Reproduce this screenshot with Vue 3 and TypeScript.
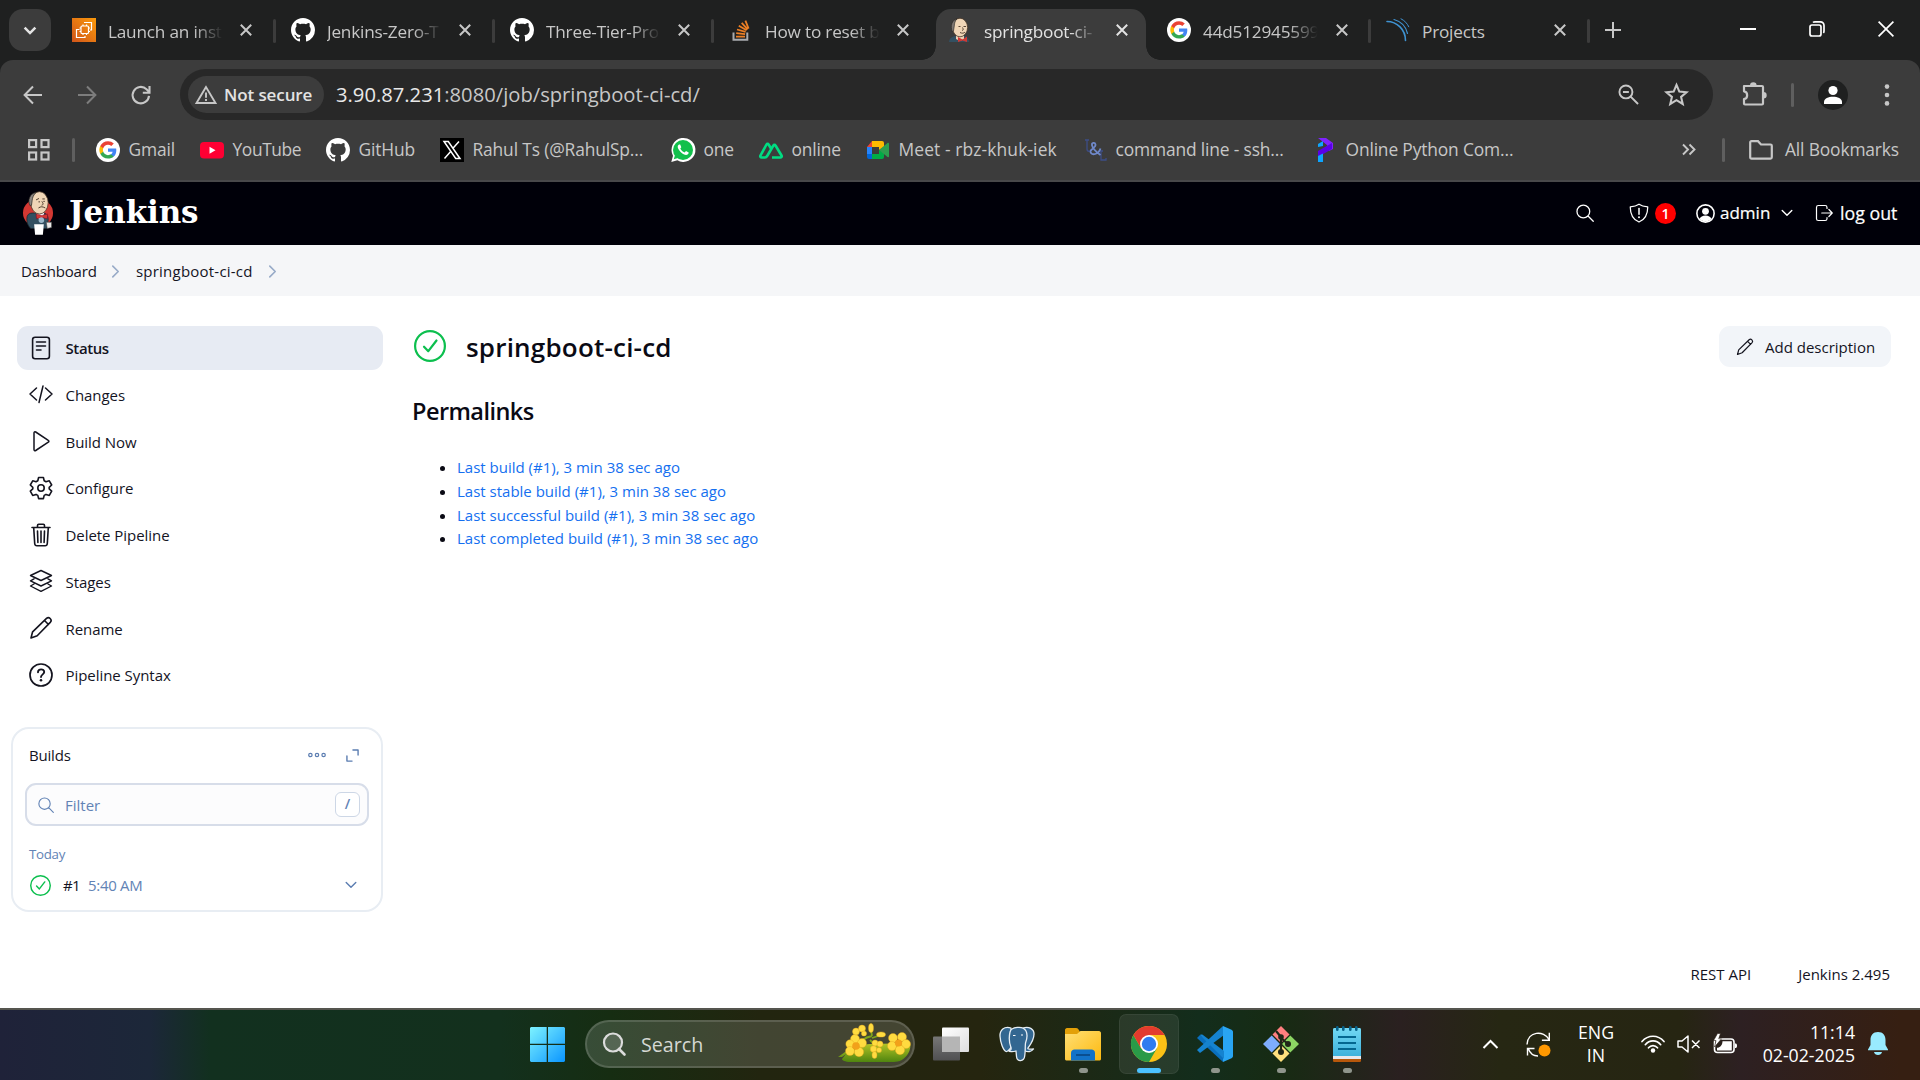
<script setup lang="ts">
interface Tab {
  icon: string
  title: string
  active?: boolean
  sep?: boolean
}

interface Bookmark {
  icon: string
  label: string
  width: number
}

const tabs: Tab[] = [
  { icon: 'aws', title: 'Launch an inst', sep: true },
  { icon: 'githubLight', title: 'Jenkins-Zero-T', sep: true },
  { icon: 'githubLight', title: 'Three-Tier-Pro', sep: true },
  { icon: 'stack', title: 'How to reset b' },
  { icon: 'butler', title: 'springboot-ci-', active: true },
  { icon: 'google', title: '44d512945599', sep: true },
  { icon: 'sonar', title: 'Projects', sep: true },
]

const bookmarks: Bookmark[] = [
  { icon: 'google', label: 'Gmail', width: 104 },
  { icon: 'youtube', label: 'YouTube', width: 126 },
  { icon: 'githubLight', label: 'GitHub', width: 114 },
  { icon: 'x', label: 'Rahul Ts (@RahulSp...', width: 231 },
  { icon: 'whatsapp', label: 'one', width: 88 },
  { icon: 'nuxt', label: 'online', width: 107 },
  { icon: 'meet', label: 'Meet - rbz-khuk-iek', width: 217 },
  { icon: 'ul', label: 'command line - ssh...', width: 230 },
  { icon: 'python', label: 'Online Python Com...', width: 204 },
]

const tasks = [
  { icon: 'doc', label: 'Status', active: true },
  { icon: 'code', label: 'Changes' },
  { icon: 'play', label: 'Build Now' },
  { icon: 'gear', label: 'Configure' },
  { icon: 'trash', label: 'Delete Pipeline' },
  { icon: 'layers', label: 'Stages' },
  { icon: 'pencil', label: 'Rename' },
  { icon: 'help', label: 'Pipeline Syntax' },
]

const permalinks = [
  'Last build (#1), 3 min 38 sec ago',
  'Last stable build (#1), 3 min 38 sec ago',
  'Last successful build (#1), 3 min 38 sec ago',
  'Last completed build (#1), 3 min 38 sec ago',
]

const apps = [
  { icon: 'taskview', state: '' },
  { icon: 'postgres', state: '' },
  { icon: 'folder', state: 'open' },
  { icon: 'chrome', state: 'current' },
  { icon: 'vscode', state: 'open' },
  { icon: 'git', state: 'open' },
  { icon: 'notepad', state: 'open' },
]

const line = 'fill="none" stroke="currentColor" stroke-linecap="round" stroke-linejoin="round"'

const icons: Record<string, { box: string; body: string }> = {
  aws: {
    box: '0 0 24 24',
    body: '<defs><linearGradient id="awsg" x1="0" y1="1" x2="1" y2="0"><stop offset="0" stop-color="#d0551a"/><stop offset="1" stop-color="#fb9a0b"/></linearGradient></defs><rect width="24" height="24" fill="url(#awsg)"/><g fill="none" stroke="#fff" stroke-width="1.2"><rect x="9" y="8" width="7.5" height="7.5" rx="1"/><path d="M11 8V6.5M14.5 8V6.5M11 17v-1.500M14.500 17v-1.500M9 10H7.500M9 13.500H7.500M18 10h-1.500M18 13.500h-1.500M12 4.500h7.500V12H18M7.500 11.500H4.500v8H13V18"/></g>',
  },
  githubLight: {
    box: '0 0 16 16',
    body: '<path fill="#fff" fill-rule="evenodd" d="M8 0C3.58 0 0 3.58 0 8c0 3.540 2.290 6.530 5.470 7.590.4.070.550-.170.550-.380 0-.190-.010-.820-.010-1.490-2.010.370-2.530-.490-2.690-.940-.090-.230-.480-.940-.820-1.130-.280-.150-.680-.520-.010-.530.630-.010 1.080.580 1.230.820.720 1.210 1.870.870 2.330.660.070-.520.280-.870.510-1.070-1.780-.2-3.640-.890-3.640-3.950 0-.870.310-1.590.820-2.150-.080-.2-.360-1.020.080-2.120 0 0 .670-.210 2.200.820.640-.180 1.320-.270 2-.270s1.360.090 2 .270c1.530-1.040 2.200-.820 2.200-.820.440 1.100.160 1.920.080 2.120.510.560.820 1.270.820 2.150 0 3.070-1.870 3.750-3.650 3.950.290.250.540.730.540 1.480 0 1.070-.010 1.930-.010 2.200 0 .210.150.460.550.380A8.010 8.010 0 0 0 16 8c0-4.420-3.580-8-8-8z"/>',
  },
  stack: {
    box: '0 0 24 24',
    body: '<path d="M4.500 14.500v7.200h13.800v-7.200" fill="none" stroke="#a9abae" stroke-width="2"/><g stroke="#ec7f25" stroke-width="1.800"><path d="M7 18.600h9M7.200 15.200l8.900.9M8 11.500l8.600 2.300M9.800 7.800l7.800 4.500M12.700 4.800l6 6.600M16.400 2.700l3.200 8"/></g>',
  },
  butler: {
    box: '0 0 24 24',
    body: '<path d="M1 24c0-3 2-5 6-6h9c3 0 5 3 5 6z" fill="#335061"/><path d="M8 16h8v5l-4 2-4-2z" fill="#ecd2b5"/><ellipse cx="12" cy="9.500" rx="7.600" ry="9.300" fill="#f0d6b7" stroke="#493728" stroke-width=".8"/><path d="M4.500 14C1.800 8 4 2 9 .7 7 3 6.500 5 6.300 8l-.8 5z" fill="#7d7672" stroke="#292521" stroke-width=".6"/><path d="M10.500 8.500h2M15.500 8.500H18M14.500 9.500c1 2 1 2.500-.5 3M12 14.500c2 1 4 1 5-.5" fill="none" stroke="#493728" stroke-width=".9"/><path d="M10 19l4.500 2.500 4.500-3v5.500l-4.500-1.500-4.500 1.500z" fill="#d33833"/>',
  },
  google: {
    box: '0 0 24 24',
    body: '<circle cx="12" cy="12" r="12" fill="#fff"/><path d="M20.300 12.200c0-.6-.05-1.200-.16-1.700H12v3.300h4.660a4 4 0 0 1-1.730 2.600v2.200h2.800c1.640-1.500 2.570-3.700 2.570-6.400z" fill="#4285f4"/><path d="M12 20.600c2.340 0 4.300-.77 5.730-2.100l-2.800-2.160c-.77.52-1.760.83-2.930.83-2.260 0-4.170-1.530-4.850-3.580H4.260v2.240A8.650 8.650 0 0 0 12 20.600z" fill="#34a853"/><path d="M7.150 13.640a5.200 5.200 0 0 1 0-3.280V8.120H4.260a8.660 8.660 0 0 0 0 7.760z" fill="#fbbc05"/><path d="M12 6.780c1.270 0 2.400.44 3.310 1.300l2.480-2.500A8.300 8.300 0 0 0 12 3.350a8.650 8.650 0 0 0-7.740 4.770l2.890 2.240C7.830 8.310 9.740 6.780 12 6.780z" fill="#ea4335"/>',
  },
  sonar: {
    box: '0 0 24 24',
    body: '<g fill="none" stroke="#3f93d2" stroke-linecap="round"><path d="M1 3.500c10 0 18.500 8 18.500 19" stroke-width="1.600"/><path d="M8 1.500c7 2 12 7 13.500 14" stroke-width="1.200"/><path d="M15 .8c4 2 6 4.500 7.800 8" stroke-width="1"/></g>',
  },
  youtube: {
    box: '0 0 24 24',
    body: '<rect y="4" width="24" height="16.500" rx="4" fill="#ff0033"/><path d="M9.500 8.700v7l6-3.500z" fill="#fff"/>',
  },
  x: {
    box: '0 0 24 24',
    body: '<rect width="24" height="24" fill="#000"/><path d="M4 3.500h4.300L20 20.500h-4.300zM19 3.500l-6.500 7.300M4.500 20.500l6.800-7.700" fill="none" stroke="#fff" stroke-width="1.500"/>',
  },
  whatsapp: {
    box: '0 0 24 24',
    body: '<path d="M.3 24l1.700-6.200A12 12 0 1 1 6.400 22.300z" fill="#fff"/><circle cx="12" cy="12" r="10" fill="#12c04c"/><path d="M2.800 21.300l1.300-4.500 3 3.300z" fill="#12c04c"/><path d="M8 6.500c-1.800 1-1.700 3 0 5.500 2 3 4.500 4.800 7 5 1.500 0 2.700-1 2.700-2.400l-2.700-1.500-1.400 1.500c-2-.7-3.400-2-4.300-4l1-1.300L9.200 6.500z" fill="#fff"/>',
  },
  nuxt: {
    box: '0 0 24 24',
    body: '<path d="M13 19.500h8.300c1.200 0 1.800-1 1.200-2l-6-10c-.5-.9-1.600-.9-2.100 0L8.500 17.500c-.6 1-1.300 2-2.500 2H2.700c-1.200 0-1.800-1-1.200-2l6-11c.5-.9 1.600-.9 2.100 0l2.400 4" fill="none" stroke="#00dc82" stroke-width="2.600" stroke-linejoin="round"/>',
  },
  meet: {
    box: '0 0 24 24',
    body: '<path d="M1 9h5V3z" fill="#ea4335"/><path d="M1 9h5v7H1z" fill="#2684fc"/><path d="M1 16h5v5H3a2 2 0 0 1-2-2z" fill="#0066da"/><path d="M6 3h10a2 2 0 0 1 2 2v4l-5 3V9H6z" fill="#ffba00"/><path d="M6 16h7v-4l5 3v4a2 2 0 0 1-2 2H6z" fill="#00ac47"/><path d="M13 12l8.500-7c.6-.4 1.500 0 1.500.8v12.400c0 .8-.9 1.200-1.500.8z" fill="#2f9e4f"/>',
  },
  ul: {
    box: '0 0 24 24',
    body: '<g fill="none" stroke="#3d4d86" stroke-width="1.300"><path d="M2 2h4M4 2v9c0 3 4 3 4 0M18 13v9h5v-2M16 13h4"/></g><path d="M17.500 10.500c-2 6-9 7.500-10 3.500-.5-3 5.500-4 5-7.500-.6-2.500-4-1.800-3.500.8.4 2 4 6.500 8.500 9.700" fill="none" stroke="#6f88c9" stroke-width="1.800"/>',
  },
  python: {
    box: '0 0 24 24',
    body: '<path d="M5 0h8l7 5v6l-4 2-2-6z" fill="#7f22fd"/><path d="M5 9v-3l5-3 0 5z" fill="#0da5ff"/><path d="M5 19v-6L19 5v6z" fill="#5a00e8"/><path d="M5 24v-6l5-2.500V24z" fill="#0da5ff"/>',
  },
  doc: {
    box: '0 0 24 24',
    body: `<g ${line} stroke-width="1.600"><rect x="3.600" y="1.200" width="16.800" height="21.600" rx="2.500"/><path d="M7.500 6h9M7.500 10h9M7.500 14h4.500"/></g>`,
  },
  code: {
    box: '0 0 24 24',
    body: `<path d="M7.500 6L1 12l6.500 6M16.500 6l6.500 6-6.500 6M14 4l-4 16.500" ${line} stroke-width="1.500"/>`,
  },
  play: {
    box: '0 0 24 24',
    body: `<path d="M5 4v16.500c0 1 .8 1.500 1.700 1l12.600-8.300c.8-.5.8-1.400 0-1.900L6.700 3C5.800 2.500 5 3 5 4z" ${line} stroke-width="1.500"/>`,
  },
  gear: {
    box: '0 0 24 24',
    body: `<g ${line} stroke-width="1.600"><circle cx="12" cy="12" r="3.200"/><path d="M9.600 1.500h4.800l.8 3.300 1.800 1 3.300-1 2.400 4.200-2.500 2.300v1.600l2.500 2.300-2.400 4.200-3.300-1-1.800 1-.8 3.200H9.600l-.8-3.200-1.800-1-3.300 1-2.400-4.200 2.500-2.300v-1.600L1.300 9l2.400-4.200 3.300 1 1.800-1z"/></g>`,
  },
  trash: {
    box: '0 0 24 24',
    body: `<g ${line} stroke-width="1.600"><path d="M3 4.500h18M8.500 4.500v-2c0-.7.500-1.200 1.200-1.200h4.600c.7 0 1.200.5 1.200 1.200v2M4.700 4.500l1 16c.1 1.400.9 2.300 2.200 2.300h8.200c1.300 0 2.100-.9 2.200-2.300l1-16M8.500 8l.4 11.500M12 8v11.500M15.500 8l-.4 11.500"/></g>`,
  },
  layers: {
    box: '0 0 24 24',
    body: `<path d="M12 1.500l10.500 5L12 11.500l-10.500-5zM5 9.800l-3.500 2L12 17l10.500-5.200-3.500-2M5 15l-3.500 2L12 22.300 22.500 17 19 15" ${line} stroke-width="1.400"/>`,
  },
  pencil: {
    box: '0 0 24 24',
    body: `<path d="M2 22l1.600-6.200L17.500 2.400c2.500-2.200 6 1.200 4 3.700L8.200 19.700zM15.500 4.500l4 4" ${line} stroke-width="1.600"/>`,
  },
  help: {
    box: '0 0 24 24',
    body: `<circle cx="12" cy="12" r="11" ${line} stroke-width="1.700"/><path d="M9 9.300c0-4 6.300-3.700 6.200-.2 0 2.300-3.200 2.300-3.200 5" ${line} stroke-width="1.900"/><circle cx="12" cy="17.300" r="1.300" fill="currentColor"/>`,
  },
  check: {
    box: '0 0 32 32',
    body: `<g ${line} stroke-width="2.200"><circle cx="16" cy="16" r="14.900"/><path d="M10 16.700l4.300 4.500 8.200-10.700"/></g>`,
  },
  search: {
    box: '0 0 24 24',
    body: `<path d="M9.800 1.500a8.500 8.500 0 1 0 0 17 8.500 8.500 0 0 0 0-17zM16 16l7 7" ${line} stroke-width="1.700"/>`,
  },
  shield: {
    box: '0 0 24 24',
    body: `<g ${line} stroke-width="1.500"><path d="M12 1.500c-3 2-6.500 2.800-10.500 3.200C1.500 13 4 19.500 12 22.800c8-3.300 10.500-9.800 10.500-18.100C18.500 4.300 15 3.500 12 1.500z"/></g><path d="M12 6.500v7" stroke="currentColor" stroke-width="1.800" stroke-linecap="round"/><circle cx="12" cy="17" r="1.200" fill="currentColor"/>`,
  },
  user: {
    box: '0 0 24 24',
    body: '<circle cx="12" cy="12" r="10.900" fill="none" stroke="currentColor" stroke-width="2"/><circle cx="12" cy="9.200" r="4.300" fill="currentColor"/><path d="M4.500 19c1.500-6 13.500-6 15 0-4 4-11 4-15 0z" fill="currentColor"/>',
  },
  down: {
    box: '0 0 12 12',
    body: `<path d="M1.200 3.500L6 8.300l4.800-4.800" ${line} stroke-width="1.400"/>`,
  },
  tabDown: {
    box: '0 0 12 12',
    body: '<path d="M1.400 4L6 8.600 10.600 4" fill="none" stroke="currentColor" stroke-width="2.200"/>',
  },
  right: {
    box: '0 0 12 12',
    body: `<path d="M3.500 1l5 5-5 5" ${line} stroke-width="1.500"/>`,
  },
  logout: {
    box: '0 0 24 24',
    body: `<path d="M16 6V4.500C16 3 15 2 13.500 2h-9C3 2 2 3 2 4.500v15C2 21 3 22 4.500 22h9c1.500 0 2.500-1 2.500-2.500V18M9 12h14M18.500 7.300L23 12l-4.500 4.700" ${line} stroke-width="1.600"/>`,
  },
  dots: {
    box: '0 0 18 6',
    body: '<g fill="none" stroke="currentColor" stroke-width="1.200"><circle cx="2.400" cy="3" r="1.700"/><circle cx="9" cy="3" r="1.700"/><circle cx="15.600" cy="3" r="1.700"/></g>',
  },
  expand: {
    box: '0 0 14 14',
    body: `<path d="M7.500 1H13v5.500M6.500 13H1V7.500" ${line} stroke-width="1.500"/>`,
  },
  close: {
    box: '0 0 12 12',
    body: '<path d="M.8.8l10.400 10.400M11.200.8L.8 11.200" stroke="currentColor" stroke-width="2" fill="none"/>',
  },
  plus: {
    box: '0 0 16 16',
    body: '<path d="M8 0v16M0 8h16" stroke="currentColor" stroke-width="2" fill="none"/>',
  },
  back: {
    box: '0 0 20 20',
    body: '<path d="M19 10H2M10 1.500L1.600 10l8.400 8.500" stroke="currentColor" stroke-width="2" fill="none"/>',
  },
  forward: {
    box: '0 0 20 20',
    body: '<path d="M1 10h17M10 1.500l8.400 8.500L10 18.500" stroke="currentColor" stroke-width="2" fill="none"/>',
  },
  reload: {
    box: '0 0 20 20',
    body: '<path d="M18 10.800a8.200 8.200 0 1 1-2.500-6.600L18.300 7M18.500 1v6.700h-6.700" stroke="currentColor" stroke-width="2.100" fill="none"/>',
  },
  warn: {
    box: '0 0 22 20',
    body: '<path d="M11 2L1.500 18h19z" stroke="currentColor" stroke-width="1.900" fill="none"/><path d="M11 7.500v5.200M11 14v2" stroke="currentColor" stroke-width="1.900"/>',
  },
  zoom: {
    box: '0 0 22 22',
    body: '<circle cx="8.300" cy="8.300" r="6.800" stroke="currentColor" stroke-width="2" fill="none"/><path d="M13 13l8 8M5.200 8.300h6.200" stroke="currentColor" stroke-width="2"/>',
  },
  star: {
    box: '0 0 24 24',
    body: '<path d="M12 2.800l2.700 6.400 6.900.6-5.200 4.500 1.600 6.800-6-3.600-6 3.600 1.600-6.800-5.200-4.500 6.900-.6z" stroke="currentColor" stroke-width="2" fill="none"/>',
  },
  puzzle: {
    box: '0 0 26 26',
    body: '<path d="M3 5h18a1 1 0 0 1 1 1v16.500a1 1 0 0 1-1 1H4a1 1 0 0 1-1-1V18c4.200-.5 4.200-7.200 0-7.700z" stroke="currentColor" stroke-width="2.200" fill="none" stroke-linejoin="round"/><path d="M9 4.500a3.300 3.300 0 0 1 6.600 0zM22.500 11a3.200 3.200 0 0 1 0 6.400z" fill="currentColor"/>',
  },
  avatar: {
    box: '0 0 30 30',
    body: '<circle cx="15" cy="15" r="15" fill="#1f2020"/><circle cx="15" cy="10.500" r="4.600" fill="#fff"/><path d="M6 24v-2c0-7 18-7 18 0v2z" fill="#fff"/>',
  },
  more: {
    box: '0 0 6 22',
    body: '<g fill="currentColor"><circle cx="3" cy="2.600" r="2.300"/><circle cx="3" cy="11" r="2.300"/><circle cx="3" cy="19.400" r="2.300"/></g>',
  },
  grid: {
    box: '0 0 22 22',
    body: '<g fill="none" stroke="currentColor" stroke-width="2.200"><rect x="1.100" y="1.100" width="7" height="7"/><rect x="13.500" y="1.100" width="7" height="7"/><rect x="1.100" y="13.500" width="7" height="7"/><rect x="13.500" y="13.500" width="7" height="7"/></g>',
  },
  chevrons: {
    box: '0 0 14 12',
    body: '<path d="M1 1l5 5-5 5M7.500 1l5 5-5 5" stroke="currentColor" stroke-width="1.900" fill="none"/>',
  },
  dir: {
    box: '0 0 24 20',
    body: '<path d="M1.200 2.500c0-.8.500-1.300 1.300-1.300h6.500l3 3.300h9.500c.8 0 1.300.5 1.300 1.300v11.500c0 .8-.5 1.300-1.300 1.300h-19c-.8 0-1.300-.5-1.300-1.300z" fill="none" stroke="currentColor" stroke-width="2.200"/>',
  },
  logo: {
    box: '0 0 33 46',
    body: '<ellipse cx="16.500" cy="23" rx="15.500" ry="14.500" fill="#d33833"/><path d="M5 29c0-4 2-6 6-6h11c4 0 5 4 5 7l-1 9H9c-3-3-4-6-4-10z" fill="#335061" stroke="#1b2a33" stroke-width=".8"/><path d="M14 21h9l-1 6-4 4z" fill="#fff"/><ellipse cx="18" cy="12.500" rx="9" ry="11.500" fill="#f0d6b7" stroke="#493728" stroke-width=".8"/><path d="M8.500 15.500C5 10 8.500 2.500 14.500 1.800 12 4 10.800 7 10.500 10l-.7 5z" fill="#8d8782" stroke="#292521" stroke-width=".7"/><path d="M14.500 9.500l3-1.500M21 8.500h2.500M17 11.500h1.500M22 11h1.500M20.500 11c1.500 2.500 2 3.200-.3 4M17 17.800c2.500-1.700 4-1.500 7 0" fill="none" stroke="#493728" stroke-width="1"/><path d="M14.500 24l6 1.500 6-1.500-.5 5-5.500-1.500-5.500 1.500z" fill="#d33833" stroke="#81001f" stroke-width=".5"/><circle cx="20" cy="30.500" r="2.800" fill="#9bb7c9"/><path d="M12.500 34.500h10l-1 11h-8z" fill="#fff"/><path d="M25 32.500h5.500V38L26 39z" fill="#e8e8e8" stroke="#444" stroke-width=".6"/>',
  },
  windows: {
    box: '0 0 35 35',
    body: '<defs><linearGradient id="wing" x1="0" y1="0" x2="1" y2="1"><stop offset="0" stop-color="#7df3ff"/><stop offset=".5" stop-color="#45c4ff"/><stop offset="1" stop-color="#0a95ff"/></linearGradient></defs><path d="M1 0h15.700v16.700H0V1zM18 0h16l1 1v15.700H18zM0 18h16.700v17H1l-1-1zM18 18h17v16l-1 1H18z" fill="url(#wing)"/>',
  },
  taskview: {
    box: '0 0 36 36',
    body: '<defs><linearGradient id="tvd" x1="0" y1="0" x2="0" y2="1"><stop offset="0" stop-color="#777"/><stop offset="1" stop-color="#505052"/></linearGradient><linearGradient id="tvl" x1="0" y1="0" x2="1" y2="1"><stop offset="0" stop-color="#fff"/><stop offset="1" stop-color="#dedede"/></linearGradient></defs><rect x="0" y="10.500" width="27" height="24" rx="1" fill="url(#tvd)"/><rect x="9" y="1.500" width="27" height="24.500" rx="1" fill="url(#tvl)"/><path d="M9 10.500h18V26H9z" fill="#b5b5b5"/>',
  },
  postgres: {
    box: '0 0 36 36',
    body: '<g fill="#336791" stroke="#e6eef4" stroke-width="1.300" stroke-linejoin="round"><path d="M12 2C5 0 .8 4 1 10c.3 6 3 14 6 15.500 2 .8 3.500-2 5-4z"/><path d="M24 2c6-2 11 1 11 6 0 4-3 10-6 14-1 1.500 3 1.300 5.500 1-2 3-6 3-8.500 2z"/><path d="M11 6c1-5 13-7 16-1 2 4 1 8-.5 12-.5 4 0 8-.8 13-.6 5.500-7.700 6.500-8.200.5L17 25c-3 1-7 1-7.500-.5 2 0 3-1 2.500-3-2-5-2-11-1-15.500z"/></g><path d="M14 9.500h2.500M22 9h2" stroke="#fff" stroke-width="1.200"/>',
  },
  folder: {
    box: '0 0 36 36',
    body: '<defs><linearGradient id="fol" x1="0" y1="0" x2="1" y2="1"><stop offset="0" stop-color="#ffdf75"/><stop offset="1" stop-color="#fdb90f"/></linearGradient></defs><path d="M0 4c0-1 .8-2 2-2h9c2 0 3 2 4 4v6H0z" fill="#e3a008"/><path d="M0 8h12l3.500-3H34c1 0 2 1 2 2v26c0 1-1 1.500-2 1.500H2c-1 0-2-.5-2-1.500z" fill="url(#fol)"/><path d="M6 34.500V27c0-2 1.500-3.500 3.500-3.500h17c2 0 3.500 1.500 3.500 3.500v7.500z" fill="#1272c8"/><path d="M11 29h14" stroke="#0b4a8a" stroke-width="1.800"/>',
  },
  chrome: {
    box: '0 0 36 36',
    body: '<circle cx="18" cy="18" r="18" fill="#fbc116"/><path d="M2.400 9A18 18 0 0 0 18 36l7.800-13.500H10.200z" fill="#2a9a48"/><path d="M2.400 9a18 18 0 0 1 31.200 0H18L10.200 22.500z" fill="#e33b2e"/><circle cx="18" cy="18" r="9" fill="#fff"/><circle cx="18" cy="18" r="7.200" fill="#2f7bf0"/>',
  },
  vscode: {
    box: '0 0 36 36',
    body: '<path d="M3 9L0 12l26 24 1-9z" fill="#0a6fbd"/><path d="M26 0L0 24l3 3 24-18z" fill="#1583d0"/><path d="M26 0l8.500 3.800c.9.500 1.500 1.200 1.500 2.200v24c0 1-.6 1.700-1.500 2.200L26 36z" fill="#29a5f3"/><path d="M3 9c.8-.6 2-.6 3 0l21 16v8z" fill="#1583d0"/>',
  },
  git: {
    box: '0 0 36 36',
    body: '<path d="M18 0l8.500 8.500L18 17 9.500 8.500z" fill="#ff7f80"/><path d="M8.700 9.500L17 18l-8.300 8.500L0 18z" fill="#7eadfd"/><path d="M27.300 9.500L36 18l-8.700 8.500L19 18z" fill="#8cd563"/><path d="M18 19l8.500 8.500L18 36l-8.500-8.500z" fill="#ffe07e"/><path d="M13 5l5 6v15M18 12l7 6" stroke="#202618" stroke-width="2.200" fill="none"/><g fill="#202618"><circle cx="18" cy="11" r="2.800"/><circle cx="18" cy="26" r="3"/><circle cx="25" cy="18" r="3"/></g>',
  },
  notepad: {
    box: '0 0 36 36',
    body: '<defs><linearGradient id="npd" x1="0" y1="0" x2="0" y2="1"><stop offset="0" stop-color="#72d8f3"/><stop offset="1" stop-color="#3eb2dc"/></linearGradient></defs><path d="M4 30h28v4.500c0 1-.6 1.500-1.500 1.500h-25c-1 0-1.500-.5-1.500-1.500z" fill="#b7570b"/><path d="M4 29h28v4H4z" fill="#e8e8ec"/><path d="M4 3.500C4 2.500 4.600 2 5.500 2h25c.9 0 1.500.5 1.500 1.500V30H4z" fill="url(#npd)"/><path d="M9 11h18M9 17h18M9 23h18" stroke="#046790" stroke-width="2"/><g fill="#07628a"><rect x="7" y="0" width="2.600" height="5" rx="1.300"/><rect x="13" y="0" width="2.600" height="5" rx="1.300"/><rect x="20" y="0" width="2.600" height="5" rx="1.300"/><rect x="26" y="0" width="2.600" height="5" rx="1.300"/></g>',
  },
  flowers: {
    box: '0 0 74 42',
    body: '<defs><linearGradient id="lf" x1="0" y1="0" x2="0" y2="1"><stop offset="0" stop-color="#b5c526"/><stop offset="1" stop-color="#4f850f"/></linearGradient></defs><path d="M0 33l7-5 6-2c8-5 14-6 22-6l37-1c2 8-5 19-16 19H12c-5 0-8-2-8-3l4-5-4 3z" fill="url(#lf)"/><path d="M20 24c2-8 8-11 14-12M34 12l-1-6M34 14l9-3M32 16l6 6" stroke="#7fa51b" stroke-width="1.800" fill="none"/><g fill="#ffdb40" stroke="#e3a51c" stroke-width=".4"><circle cx="17" cy="15" r="4.500"/><circle cx="12" cy="20" r="4.200"/><circle cx="24" cy="19" r="4.500"/><circle cx="12" cy="27" r="4.500"/><circle cx="21" cy="28" r="4.700"/><circle cx="55" cy="14" r="4.500"/><circle cx="64" cy="13" r="4.500"/><circle cx="68" cy="20" r="4.500"/><circle cx="54" cy="22" r="4.500"/><circle cx="62" cy="26" r="4.700"/><circle cx="18" cy="7.500" r="3.500"/><circle cx="24" cy="4.500" r="3.500"/><circle cx="26" cy="9.500" r="2.600"/><ellipse cx="33" cy="4" rx="2.500" ry="4.500"/><ellipse cx="43" cy="10.500" rx="4.500" ry="2.600"/><circle cx="37" cy="19" r="3"/><circle cx="42" cy="20" r="3"/><circle cx="35.500" cy="25" r="3.200"/><ellipse cx="36.500" cy="31" rx="2.500" ry="3.500"/><circle cx="41" cy="26" r="2.600"/></g><g fill="#f2a11a"><circle cx="18" cy="22" r="3.800"/><circle cx="60.500" cy="19" r="3.600"/></g>',
  },
  minimize: { box: '0 0 16 16', body: '<path d="M0 8h16" stroke="currentColor" stroke-width="2"/>' },
  restore: {
    box: '0 0 16 16',
    body: '<g fill="none" stroke="currentColor" stroke-width="1.700"><rect x="1" y="4" width="11" height="11" rx="2"/><path d="M4 1.500c.5-.5 1-.6 2-.6h5.500a3.500 3.500 0 0 1 3.500 3.500V10c0 1-.1 1.500-.6 2"/></g>',
  },
  exit: { box: '0 0 16 16', body: '<path d="M.6.6l14.800 14.800M15.400.6L.6 15.400" stroke="currentColor" stroke-width="1.700"/>' },
  taskSearch: {
    box: '0 0 24 24',
    body: '<circle cx="11" cy="10.500" r="9" fill="#fff" fill-opacity=".15" stroke="#dcdcdc" stroke-width="2.200"/><path d="M17 17l5.500 5.500" stroke="#dcdcdc" stroke-width="2.600" stroke-linecap="round"/>',
  },
  up: { box: '0 0 16 10', body: '<path d="M1 9l7-7 7 7" fill="none" stroke="currentColor" stroke-width="2"/>' },
  sync: {
    box: '0 0 25 25',
    body: '<path d="M1 12.500C1.500-1 18-2 23 7.500M23.300.8v7.400h-7.400M12 24c-4.500 0-8-2.500-9.800-7.500M1.500 23.500v-7h7" fill="none" stroke="currentColor" stroke-width="1.400"/><circle cx="18.500" cy="18.500" r="6" fill="#ff9800"/>',
  },
  wifi: {
    box: '0 0 24 18',
    body: '<g fill="none" stroke="currentColor" stroke-width="1.700" stroke-linecap="round"><path d="M1 6.500c6-7 16-7 22 0M4.300 9.700c4.300-5 11.100-5 15.400 0M7.500 12.800c2.500-3 6.500-3 9 0"/></g><circle cx="12" cy="15.500" r="2.200" fill="currentColor"/>',
  },
  mute: {
    box: '0 0 24 18',
    body: '<path d="M1 6v6h4l6 5V1L5 6zM15 5.500l7.500 7.500M22.500 5.500L15 13" fill="none" stroke="currentColor" stroke-width="1.500" stroke-linejoin="round"/>',
  },
  battery: {
    box: '0 0 24 20',
    body: '<rect x="1.500" y="5" width="19.500" height="13.500" rx="3" fill="none" stroke="currentColor" stroke-width="1.600"/><path d="M9.500 7.200h9.300v9.200H4v-2.600c3 0 5.500-2.800 5.500-6.600z" fill="currentColor"/><path d="M22 9.500c1.500 0 2 .5 2 2.200s-.5 2.300-2 2.300z" fill="currentColor"/><path d="M4.500-.5L.6 6.500h2.400L1.500 13 8.500 4.800H5.700L7.500-.5z" fill="currentColor" stroke="#2b2018" stroke-width=".6"/>',
  },
  bell: {
    box: '0 0 20 24',
    body: '<path d="M10 0c5 0 7.500 3.500 7.500 8v5l2.500 4.500v.7H0v-.7L2.500 13V8C2.500 3.500 5 0 10 0zM6 20h8c-.5 4-7.500 4-8 0z" fill="#99ebff"/>',
  },
}
</script>

<template>
  <div class="screen">
    <div class="tabstrip">
      <div class="tabsearch"><svg :viewBox="icons.tabDown.box" v-html="icons.tabDown.body" /></div>
      <div class="tabs">
        <div v-for="(t, i) in tabs" :key="i" class="tab" :class="{ active: t.active, sep: t.sep }">
          <svg class="fav" :viewBox="icons[t.icon].box" v-html="icons[t.icon].body" />
          <span class="tabtitle" :class="{ fade: t.title.length > 9 }">{{ t.title }}</span>
          <svg class="tabclose" :viewBox="icons.close.box" v-html="icons.close.body" />
        </div>
      </div>
      <svg class="newtab" :viewBox="icons.plus.box" v-html="icons.plus.body" />
      <div class="winctl">
        <svg v-for="n in ['minimize', 'restore', 'exit']" :key="n" :viewBox="icons[n].box" v-html="icons[n].body" />
      </div>
    </div>

    <div class="chrome">
      <div class="toolbar">
        <div class="nav">
          <svg :viewBox="icons.back.box" v-html="icons.back.body" />
          <svg class="dim" :viewBox="icons.forward.box" v-html="icons.forward.body" />
          <svg :viewBox="icons.reload.box" v-html="icons.reload.body" />
        </div>
        <div class="omnibox">
          <div class="chip">
            <svg :viewBox="icons.warn.box" v-html="icons.warn.body" />
            <span>Not secure</span>
          </div>
          <span class="url"><b>3.90.87.231</b>:8080/job/springboot-ci-cd/</span>
          <svg class="zoom" :viewBox="icons.zoom.box" v-html="icons.zoom.body" />
          <svg class="star" :viewBox="icons.star.box" v-html="icons.star.body" />
        </div>
        <svg class="puzzle" :viewBox="icons.puzzle.box" v-html="icons.puzzle.body" />
        <i class="vsep" />
        <svg class="avatar" :viewBox="icons.avatar.box" v-html="icons.avatar.body" />
        <svg class="more" :viewBox="icons.more.box" v-html="icons.more.body" />
      </div>
      <div class="bookmarks">
        <svg class="grid" :viewBox="icons.grid.box" v-html="icons.grid.body" />
        <i class="vsep" />
        <div class="marks">
          <div v-for="b in bookmarks" :key="b.label" class="mark" :class="'mark-' + b.icon" :style="{ width: b.width + 'px' }">
            <svg :viewBox="icons[b.icon].box" v-html="icons[b.icon].body" />
            <span>{{ b.label }}</span>
          </div>
        </div>
        <svg class="chevrons" :viewBox="icons.chevrons.box" v-html="icons.chevrons.body" />
        <i class="vsep" />
        <svg class="dir" :viewBox="icons.dir.box" v-html="icons.dir.body" />
        <span class="all">All Bookmarks</span>
      </div>
    </div>

    <header class="header">
      <svg class="logo" :viewBox="icons.logo.box" v-html="icons.logo.body" />
      <span class="brand">Jenkins</span>
      <svg class="hsearch" :viewBox="icons.search.box" v-html="icons.search.body" />
      <svg class="hshield" :viewBox="icons.shield.box" v-html="icons.shield.body" />
      <span class="badge">1</span>
      <svg class="huser" :viewBox="icons.user.box" v-html="icons.user.body" />
      <span class="admin">admin</span>
      <svg class="hdown" :viewBox="icons.down.box" v-html="icons.down.body" />
      <svg class="hout" :viewBox="icons.logout.box" v-html="icons.logout.body" />
      <span class="logout">log out</span>
    </header>

    <nav class="crumbs">
      <span class="c1">Dashboard</span>
      <svg :viewBox="icons.right.box" v-html="icons.right.body" />
      <span class="c2">springboot-ci-cd</span>
      <svg :viewBox="icons.right.box" v-html="icons.right.body" />
    </nav>

    <div class="page">
      <aside class="side">
        <ul class="tasks">
          <li v-for="t in tasks" :key="t.label" :class="{ on: t.active }">
            <svg :viewBox="icons[t.icon].box" v-html="icons[t.icon].body" />
            <span>{{ t.label }}</span>
          </li>
        </ul>
        <section class="builds">
          <div class="bhead">
            <span>Builds</span>
            <svg class="dots" :viewBox="icons.dots.box" v-html="icons.dots.body" />
            <svg class="expand" :viewBox="icons.expand.box" v-html="icons.expand.body" />
          </div>
          <div class="filter">
            <svg :viewBox="icons.search.box" v-html="icons.search.body" />
            <span>Filter</span>
            <kbd>/</kbd>
          </div>
          <div class="today">Today</div>
          <div class="brow">
            <svg class="ok" :viewBox="icons.check.box" v-html="icons.check.body" />
            <span class="num">#1</span>
            <span class="time">5:40 AM</span>
            <svg class="bdown" :viewBox="icons.down.box" v-html="icons.down.body" />
          </div>
        </section>
      </aside>
      <main class="main">
        <div class="titlebar">
          <svg class="bigok" :viewBox="icons.check.box" v-html="icons.check.body" />
          <h1>springboot-ci-cd</h1>
          <button class="add">
            <svg :viewBox="icons.pencil.box" v-html="icons.pencil.body" />
            <span>Add description</span>
          </button>
        </div>
        <h2>Permalinks</h2>
        <ul class="links">
          <li v-for="p in permalinks" :key="p"><a>{{ p }}</a></li>
        </ul>
        <footer class="foot">
          <span class="rest">REST API</span>
          <span>Jenkins 2.495</span>
        </footer>
      </main>
    </div>

    <div class="taskbar">
      <svg class="start" :viewBox="icons.windows.box" v-html="icons.windows.body" />
      <div class="tsearch">
        <svg class="tglass" :viewBox="icons.taskSearch.box" v-html="icons.taskSearch.body" />
        <span>Search</span>
        <svg class="flowers" :viewBox="icons.flowers.box" v-html="icons.flowers.body" />
      </div>
      <div class="apps">
        <div v-for="a in apps" :key="a.icon" class="app" :class="a.state">
          <svg :viewBox="icons[a.icon].box" v-html="icons[a.icon].body" />
          <i v-if="a.state" />
        </div>
      </div>
      <div class="tray">
        <svg class="up" :viewBox="icons.up.box" v-html="icons.up.body" />
        <svg class="sync" :viewBox="icons.sync.box" v-html="icons.sync.body" />
        <div class="lang"><span>ENG</span><span>IN</span></div>
        <svg class="wifi" :viewBox="icons.wifi.box" v-html="icons.wifi.body" />
        <svg class="mute" :viewBox="icons.mute.box" v-html="icons.mute.body" />
        <svg class="batt" :viewBox="icons.battery.box" v-html="icons.battery.body" />
        <div class="clock"><span>11:14</span><span>02-02-2025</span></div>
        <svg class="bell" :viewBox="icons.bell.box" v-html="icons.bell.body" />
      </div>
    </div>
  </div>
</template>

<style>
body {
  overflow: hidden;
}
</style>

<style scoped>
.screen {
  width: 1920px;
  height: 1080px;
  display: flex;
  flex-direction: column;
  font-family: "Open Sans", "Noto Sans", sans-serif;
  color: #14141f;
  background: #fff;
  overflow: hidden;
}
.screen * { box-sizing: border-box; }
svg { display: block; flex: none; overflow: visible; }
span { white-space: nowrap; }

/* tab strip */
.tabstrip {
  height: 60px;
  flex: none;
  display: flex;
  background: #1f2020;
  color: #c7c7c7;
}
.tabsearch {
  width: 42px;
  height: 42px;
  margin: 9px 4px 0 9px;
  border-radius: 14px;
  background: #3c3c3c;
  display: flex;
  align-items: center;
  justify-content: center;
}
.tabsearch svg { width: 14px; height: 14px; color: #e3e3e3; }
.tabs { display: flex; }
.tab {
  width: 219px;
  height: 60px;
  padding: 0 22px 0 17px;
  display: flex;
  align-items: center;
  position: relative;
}
.tab.sep::after {
  content: "";
  position: absolute;
  right: -2px;
  top: 19px;
  width: 3px;
  height: 24px;
  border-radius: 2px;
  background: #3c3c3c;
}
.fav { width: 24px; height: 24px; }
.tabtitle {
  width: 118px;
  margin: 4px 14px 0 12px;
  font-size: 17.200px;
  line-height: 26px;
  letter-spacing: -0.2px;
}
.tabtitle.fade { mask-image: linear-gradient(90deg, #000 74%, transparent 99%); }
.tabclose { width: 12px; height: 12px; margin-left: 2.500px; }
.tab.active { color: #e3e3e3; }
.tab.active::before {
  content: "";
  position: absolute;
  left: 5px;
  top: 9px;
  width: 210px;
  height: 51px;
  border-radius: 15px 15px 0 0;
  background: #3c3c3c;
}
.tab.active > * { position: relative; }
.tab.active::after {
  content: "";
  position: absolute;
  left: -9px;
  bottom: 0;
  width: 238px;
  height: 14px;
  background:
    radial-gradient(circle at 0 0, transparent 13.500px, #3c3c3c 14px) 0 0 / 14px 14px no-repeat,
    radial-gradient(circle at 100% 0, transparent 13.500px, #3c3c3c 14px) 100% 0 / 14px 14px no-repeat;
}
.newtab { width: 16px; height: 16px; margin: 22px 0 0 17px; }
.winctl {
  margin: 21px 26px 0 auto;
  display: flex;
  gap: 53px;
  color: #fff;
}
.winctl svg { width: 16px; height: 16px; }

/* toolbar */
.chrome {
  height: 122px;
  flex: none;
  background: #1f2020;
  color: #c7c7c7;
}
.toolbar {
  height: 65px;
  border-radius: 13px 13px 0 0;
  background: #3c3c3c;
  display: flex;
  align-items: center;
  padding: 4px 0 0 23px;
}
.nav { display: flex; gap: 34px; width: 157px; }
.nav svg { width: 20px; height: 20px; }
.dim { color: #7d7d7d; }
.omnibox {
  width: 1533px;
  height: 51px;
  border-radius: 26px;
  background: #282828;
  display: flex;
  align-items: center;
  padding-left: 8px;
}
.chip {
  width: 136px;
  height: 37px;
  border-radius: 19px;
  background: #3c3c3c;
  color: #e3e3e3;
  display: flex;
  align-items: center;
  padding-left: 7px;
  margin-right: 12px;
}
.chip svg { width: 22px; height: 20px; margin-right: 7px; color: #c7c7c7; }
.chip span { font-size: 17px; font-weight: 600; letter-spacing: -0.1px; }
.url { font-size: 20.200px; color: #c7c7c7; width: 1282px; line-height: 30px; margin-top: -2px; }
.url b { font-weight: 400; color: #e8e8e8; }
.zoom { width: 21px; height: 21px; }
.star { width: 25px; height: 25px; margin-left: 25px; }
.puzzle { width: 26px; height: 26px; margin: -2px 0 0 28px; }
.vsep { width: 3px; height: 24px; border-radius: 2px; background: #5f5f5f; flex: none; }
.toolbar .vsep { margin: 0 24px 0 24px; }
.avatar { width: 30px; height: 30px; }
.more { width: 6px; height: 22px; margin-left: 36px; }
.bookmarks {
  height: 57px;
  padding: 0 0 6px 28px;
  border-bottom: 2px solid #48484a;
  background: #3c3c3c;
  display: flex;
  align-items: center;
  font-size: 17.400px;
}
.grid { width: 22px; height: 22px; }
.bookmarks .vsep { margin-left: 22px; }
.marks { display: flex; width: 1587px; padding-left: 21px; }
.mark { display: flex; align-items: center; flex: none; }
.mark svg { width: 24px; height: 24px; margin-right: 8.500px; }
.mark span, .all { line-height: 26px; letter-spacing: -0.15px; margin-top: -1px; }
.mark.mark-meet span { letter-spacing: 0.12px; }
.mark.mark-youtube span { letter-spacing: -0.4px; }
.chevrons { width: 14px; height: 13px; margin-left: 20px; }
.bookmarks .chevrons + .vsep { margin-left: 26px; }
.dir { width: 24px; height: 20px; margin: 0 12px 0 24px; }

/* header */
.header {
  height: 63px;
  flex: none;
  background: #000009;
  color: #fff;
  display: flex;
  align-items: center;
  padding: 0 0 1px 22px;
}
.logo { width: 32px; height: 46px; margin-right: 15px; }
.brand {
  width: 1507px;
  margin-top: -3px;
  font-family: "DejaVu Serif", Georgia, serif;
  font-weight: 700;
  font-size: 31px;
  letter-spacing: -0.1px;
}
.hsearch { width: 18px; height: 18px; }
.hshield { width: 20px; height: 20px; margin-left: 35px; }
.badge {
  width: 21px;
  height: 21px;
  margin-left: 6px;
  border-radius: 50%;
  background: #f00;
  font-size: 14px;
  line-height: 21px;
  text-align: center;
  font-weight: 600;
}
.huser { width: 19px; height: 19px; margin: 0 5px 0 20px; }
.admin, .logout { line-height: 24px; -webkit-text-stroke: 0.2px #fff; }
.admin { width: 61px; font-size: 17px; }
.logout { font-size: 17.800px; }
.hdown { width: 12px; height: 12px; }
.hout { width: 20px; height: 18px; margin: 0 6px 0 21px; }

/* breadcrumbs */
.crumbs {
  height: 51px;
  flex: none;
  background: #f5f6f8;
  display: flex;
  align-items: center;
  padding: 1px 0 0 21px;
  font-size: 15px;
}
.crumbs svg { width: 13px; height: 13px; color: #98abc8; }
.crumbs span { margin-top: -1px; }
.c1 { width: 88px; letter-spacing: -0.2px; }
.crumbs .c2 { width: 130px; margin-left: 14px; letter-spacing: 0.22px; }

/* page */
.page { height: 712px; flex: none; display: flex; }
.side { width: 383px; padding: 30px 0 0 11px; }
.tasks { list-style: none; margin: 0 0 0 6px; padding: 0; width: 366px; }
.tasks li {
  height: 44px;
  margin-bottom: 2.750px;
  border-radius: 11px;
  display: flex;
  align-items: center;
  padding-left: 12px;
  font-size: 15px;
}
.tasks li.on { background: #e7ebf3; font-weight: 600; }
.tasks li.on span { letter-spacing: -0.4px; }
.tasks svg { width: 24px; height: 24px; margin: -1px 12.500px 0 0; }
.tasks span { letter-spacing: -0.05px; }
.builds {
  width: 372px;
  height: 185px;
  margin-top: 30px;
  border: 2px solid #e8edf3;
  border-radius: 18px;
  padding: 0 12px;
  font-size: 15px;
}
.bhead { display: flex; align-items: center; height: 52px; margin-bottom: 2px; padding-left: 4px; }
.bhead span { width: 279px; letter-spacing: -0.2px; }
.dots, .expand { color: #5b7db1; }
.dots { width: 18px; height: 6px; }
.expand { width: 13px; height: 13px; margin-left: 20px; }
.filter {
  height: 43px;
  border: 2px solid #d7dde9;
  border-radius: 11px;
  background: #fcfcfd;
  display: flex;
  align-items: center;
  padding-left: 11px;
  color: #6283b5;
}
.filter svg { width: 16px; height: 16px; margin-right: 11px; }
.filter span { width: 270px; margin-top: 1px; }
.filter kbd {
  width: 25px;
  height: 25px;
  border: 1px solid #cdd7e6;
  border-radius: 6px;
  background: #fff;
  font: 600 14px/22px "Open Sans", sans-serif;
  text-align: center;
}
.today { margin: 17px 0 0 4px; font-size: 13.300px; line-height: 22px; color: #6283b5; letter-spacing: -0.3px; }
.brow { display: flex; align-items: center; height: 40px; padding-left: 5px; }
.ok { width: 21px; height: 21px; color: #0cbf4e; }
.num { width: 25px; margin-left: 12px; font-size: 15px; letter-spacing: -0.6px; }
.time { width: 257px; font-size: 15px; letter-spacing: -0.3px; color: #6283b5; }
.bdown { width: 12px; height: 12px; color: #5b7db1; }

.main { width: 1537px; padding: 30px 29px 0; display: flex; flex-direction: column; }
.titlebar { display: flex; align-items: center; height: 41px; }
.bigok { width: 32px; height: 32px; color: #0cbf4e; margin: -2px 20px 0 2px; }
h1 { margin: 0; font-size: 26px; font-weight: 600; line-height: 36px; letter-spacing: 0.2px; color: #0a0a14; }
h2 { margin: 28px 0 1px; font-size: 23.500px; font-weight: 600; line-height: 32px; color: #0a0a14; letter-spacing: -0.55px; }
.add {
  width: 172px;
  height: 41px;
  margin-left: auto;
  border: 0;
  border-radius: 11px;
  background: #f2f5f9;
  color: #14141f;
  font: 15px "Open Sans", sans-serif;
  display: flex;
  align-items: center;
  padding: 0 0 0 17px;
}
.add svg { width: 18px; height: 18px; margin-right: 11px; }
.links { margin: 28px 0 0; padding-left: 45px; font-size: 15px; line-height: 23.800px; color: #0a0a14; }
.links a { color: #146ff0; }
.foot { margin-top: auto; padding-right: 1px; height: 54px; display: flex; justify-content: flex-end; font-size: 15px; line-height: 41px; }
.rest { margin-right: 47px; }

/* taskbar */
.taskbar {
  height: 72px;
  flex: none;
  border-top: 2px solid #55554f;
  background: linear-gradient(90deg, #1f2239 0, #1c2739 150px, #12301f 210px, #13301d 500px, #162d12 610px, #22250f 760px, #25250f 980px, #132d1c 1200px, #172b13 1280px, #2a2020 1400px, #262713 1500px, #262512 1680px, #2d2022 1740px, #361f12 1900px);
  display: flex;
  align-items: center;
  padding: 0 0 2px 530px;
  color: #fff;
}
.start { width: 35px; height: 35px; }
.tsearch {
  width: 330px;
  height: 48px;
  margin: 0 9px 0 20px;
  border: 2px solid rgba(255, 255, 255, 0.14);
  border-radius: 24px;
  background: rgba(255, 255, 255, 0.15);
  display: flex;
  align-items: center;
  padding-left: 15px;
}
.tglass { width: 24px; height: 24px; margin-right: 15px; }
.tsearch span { width: 197px; font-size: 19.700px; color: #d5d8d3; margin-top: 1px; }
.flowers { width: 74px; height: 42px; margin-top: 2px; }
.apps { display: flex; gap: 6px; width: 530px; margin-left: -3px; }
.app {
  width: 60px;
  height: 60px;
  border-radius: 7px;
  display: flex;
  justify-content: center;
  align-items: center;
  position: relative;
}
.app svg { width: 36px; height: 36px; }
.app.current { background: rgba(255, 255, 255, 0.08); box-shadow: inset 0 0 0 1px rgba(255, 255, 255, 0.06); }
.app i {
  position: absolute;
  left: 26px;
  bottom: 1px;
  width: 9px;
  height: 5px;
  border-radius: 3px;
  background: #8f958c;
}
.app.current i { left: 18px; width: 24px; background: #4cc2ff; }
.tray { display: flex; align-items: center; }
.up { width: 17px; height: 10px; margin-left: 31px; }
.sync { width: 25px; height: 25px; margin-left: 27px; }
.lang, .clock { display: flex; flex-direction: column; font-size: 17.700px; line-height: 23px; }
.lang { width: 46px; margin-left: 22px; align-items: center; }
.wifi { width: 24px; height: 18px; margin-left: 22px; }
.mute { width: 24px; height: 18px; margin-left: 12px; }
.batt { width: 24px; height: 20px; margin-left: 12px; }
.clock { width: 118px; align-items: flex-end; }
.bell { width: 20px; height: 24px; margin-left: 13px; }
</style>
